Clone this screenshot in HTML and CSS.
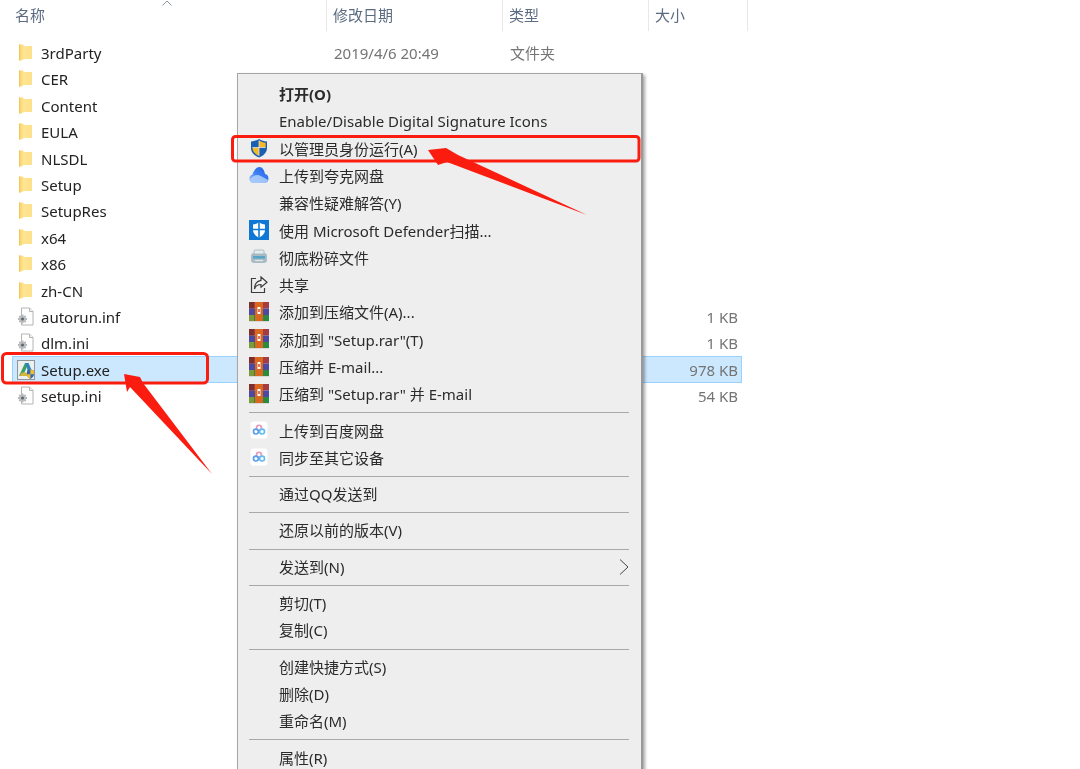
FILE: index.html
```html
<!DOCTYPE html>
<html lang="zh-CN">
<head>
<meta charset="utf-8">
<title>Setup</title>
<link rel="stylesheet" href="styles.css">
</head>
<body>
<svg class="defs" width="0" height="0" aria-hidden="true">
  <defs>
    <linearGradient id="fold" x1="0" y1="0" x2="1" y2="0"><stop offset="0" stop-color="#f6cf62"/><stop offset=".35" stop-color="#ffe592"/><stop offset="1" stop-color="#fde08a"/></linearGradient>
    <linearGradient id="cloud" x1="1" y1="0" x2="0" y2="1"><stop offset="0" stop-color="#1f5fe8"/><stop offset=".55" stop-color="#3f83f2"/><stop offset="1" stop-color="#b5d3fb"/></linearGradient>
    <symbol id="i-folder" viewBox="0 0 18 20"><path d="M2 1.500h4l1 1.500h8v13H7l-3 1.500H2z" fill="url(#fold)"/><path d="M2.500 1.500v16" stroke="#f0c860" fill="none"/></symbol>
    <symbol id="i-file" viewBox="0 0 18 20"><path d="M4.500 1h8l3.500 3.500V18h-11.500z" fill="#fff" stroke="#b4b4b4"/><path d="M12.500 1v3.500H16" fill="#f2f2f2" stroke="#b4b4b4"/><path d="M5.500 7.500v9M1 12h9M2.300 8.800l6.400 6.400M8.700 8.800l-6.400 6.400" stroke="#b3b7ba" stroke-width="1.800"/><circle cx="5.500" cy="12" r="3.400" fill="#b9bdc0"/><circle cx="5.500" cy="12" r="1.500" fill="#5f666b"/></symbol>
    <symbol id="i-exe" viewBox="0 0 18 20"><rect x=".5" y=".5" width="17" height="19" fill="#eef0f0" stroke="#8f9598"/><path d="M2 16 8 3h3.500L6 16z" fill="#3f9f5f"/><path d="M8 3h3.500l3.500 8h-4z" fill="#2b86bd"/><path d="M2.500 16 5 12.500h7L10 16z" fill="#d7b43a"/><path d="M10 10.500l3.400-1.300 3.600 1.300v3.800c0 2.300-1.700 3.700-3.600 4.700-1.800-1-3.400-2.400-3.400-4.700z" fill="#2f68b5"/><path d="M13.400 9.200v5h3.600v-3.700zM10 14.200h3.400V19c-1.800-1-3.400-2.400-3.400-4.800z" fill="#f2bd2e"/></symbol>
    <symbol id="i-shield" viewBox="0 0 20 20"><path d="M10 1c2.500 1.500 5 2.200 8 2.500v6.500c0 4.500-3.500 7.700-8 9.500-4.500-1.800-8-5-8-9.500V3.500C5 3.200 7.500 2.500 10 1z" fill="#1b5fb0"/><path d="M10 2.500v7h6.600V4.700c-2.500-.3-4.600-1-6.600-2.200zM10 9.500H3.400c0 4 3 6.800 6.600 8.300z" fill="#f6b926"/><path d="M10 2.500v15.300M3.400 9.500h13.200" stroke="#e9eef5" stroke-width=".7"/></symbol>
    <symbol id="i-quark" viewBox="0 0 20 18"><path d="M4.500 17a4.200 4.200 0 0 1-1.200-8.200C4.700 4.300 7.500 1 10.500 1 13.500 1 15.500 4.500 16 8a4.600 4.600 0 0 1-.5 9z" fill="url(#cloud)"/><path d="M1 13.500c2.200-3 5.500-5 9-4.200 3 .8 6 3.500 9 4.700-.8 2-2.300 3-3.500 3h-11C2.800 17 1.500 15.500 1 13.500z" fill="#a9cbfb" opacity=".9"/></symbol>
    <symbol id="i-defender" viewBox="0 0 20 20"><rect width="20" height="20" fill="#0f78d4"/><path d="M10 2.500c2 1.200 3.800 1.800 6 2v5.500c0 3.500-2.700 6-6 7.500-3.300-1.500-6-4-6-7.500V4.500c2.200-.2 4-.8 6-2z" fill="#fff"/><path d="M9.200 2.500h1.600v15h-1.600zM4 8.700h12v1.600H4z" fill="#0f78d4"/></symbol>
    <symbol id="i-shred" viewBox="0 0 20 20"><rect x="2" y="6" width="16" height="10" rx="3" fill="#a9bcc4"/><rect x="5" y="3" width="10" height="4" rx="1" fill="#e3ebed" stroke="#9fb2bb" stroke-width=".8"/><rect x="4" y="9" width="12" height="2.600" fill="#58a5c9"/><path d="M6 13.500h8" stroke="#dfe7ea" stroke-width="1.200"/></symbol>
    <symbol id="i-share" viewBox="0 0 20 20"><path d="M7 3.500H2.500v14h13V13" fill="none" stroke="#3c3c3c" stroke-width="1.200"/><path d="M12 2l6 5.200-6 5V9.500C9 9.500 6.500 11 5.500 14 5.500 9.500 8 6 12 5.300z" fill="#f2f2f2" stroke="#3c3c3c" stroke-width="1.200"/></symbol>
    <symbol id="i-rar" viewBox="0 0 20 20"><rect y="0" width="20" height="6.500" fill="#a63b44"/><rect y="6.500" width="20" height="6.500" fill="#4b4aa0"/><rect y="13" width="20" height="6" fill="#2b8a3e"/><rect y="0" width="5" height="6.500" fill="#7d2f2f"/><rect y="13" x="0" width="5" height="6" fill="#7a9a3c"/><rect x="6" width="8" height="19" fill="#d9671d"/><rect x="8.500" y="5" width="3" height="7" fill="#fff"/><rect x="9.300" y="7" width="1.400" height="3" fill="#c23b2a"/><rect y="19" width="20" height="1" fill="#d8d8d8"/></symbol>
    <symbol id="i-baidu" viewBox="-3 -3 26 26"><rect x="-1" y="-1" width="22" height="22" rx="4" fill="#fff"/><circle cx="10" cy="7" r="3.200" fill="none" stroke="#e79ab8" stroke-width="2.200"/><circle cx="6" cy="12" r="3.200" fill="none" stroke="#5a9fec" stroke-width="2.200"/><circle cx="14" cy="12" r="3.200" fill="none" stroke="#63bdf0" stroke-width="2.200"/></symbol>
  </defs>
</svg>

<div class="page">
  <header class="head">
    <div class="col col-name">名称<svg class="sort" viewBox="0 0 10 6"><path d="M.5 5.500 5 1l4.500 4.500" fill="none" stroke="#8b95a3"/></svg></div>
    <div class="col col-date">修改日期</div>
    <div class="col col-type">类型</div>
    <div class="col col-size">大小</div>
  </header>

  <div class="rows">
    <div class="row"><span class="name"><svg class="ficon"><use href="#i-folder"/></svg>3rdParty</span><span class="date">2019/4/6 20:49</span><span class="type">文件夹</span><span class="size"></span></div>
    <div class="row"><span class="name"><svg class="ficon"><use href="#i-folder"/></svg>CER</span></div>
    <div class="row"><span class="name"><svg class="ficon"><use href="#i-folder"/></svg>Content</span></div>
    <div class="row"><span class="name"><svg class="ficon"><use href="#i-folder"/></svg>EULA</span></div>
    <div class="row"><span class="name"><svg class="ficon"><use href="#i-folder"/></svg>NLSDL</span></div>
    <div class="row"><span class="name"><svg class="ficon"><use href="#i-folder"/></svg>Setup</span></div>
    <div class="row"><span class="name"><svg class="ficon"><use href="#i-folder"/></svg>SetupRes</span></div>
    <div class="row"><span class="name"><svg class="ficon"><use href="#i-folder"/></svg>x64</span></div>
    <div class="row"><span class="name"><svg class="ficon"><use href="#i-folder"/></svg>x86</span></div>
    <div class="row"><span class="name"><svg class="ficon"><use href="#i-folder"/></svg>zh-CN</span></div>
    <div class="row"><span class="name"><svg class="ficon"><use href="#i-file"/></svg>autorun.inf</span><span class="date"></span><span class="type"></span><span class="size">1 KB</span></div>
    <div class="row"><span class="name"><svg class="ficon"><use href="#i-file"/></svg>dlm.ini</span><span class="date"></span><span class="type"></span><span class="size">1 KB</span></div>
    <div class="row selected"><span class="name"><svg class="ficon"><use href="#i-exe"/></svg>Setup.exe</span><span class="date"></span><span class="type"></span><span class="size">978 KB</span></div>
    <div class="row"><span class="name"><svg class="ficon"><use href="#i-file"/></svg>setup.ini</span><span class="date"></span><span class="type"></span><span class="size">54 KB</span></div>
  </div>

  <nav class="menu">
    <div class="item bold"><span class="micon"></span>打开(O)</div>
    <div class="item"><span class="micon"></span>Enable/Disable Digital Signature Icons</div>
    <div class="item"><span class="micon"><svg><use href="#i-shield"/></svg></span>以管理员身份运行(A)</div>
    <div class="item"><span class="micon"><svg><use href="#i-quark"/></svg></span>上传到夸克网盘</div>
    <div class="item"><span class="micon"></span>兼容性疑难解答(Y)</div>
    <div class="item"><span class="micon"><svg><use href="#i-defender"/></svg></span>使用 Microsoft Defender扫描...</div>
    <div class="item"><span class="micon"><svg><use href="#i-shred"/></svg></span>彻底粉碎文件</div>
    <div class="item"><span class="micon"><svg><use href="#i-share"/></svg></span>共享</div>
    <div class="item"><span class="micon"><svg><use href="#i-rar"/></svg></span>添加到压缩文件(A)...</div>
    <div class="item"><span class="micon"><svg><use href="#i-rar"/></svg></span>添加到 "Setup.rar"(T)</div>
    <div class="item"><span class="micon"><svg><use href="#i-rar"/></svg></span>压缩并 E-mail...</div>
    <div class="item"><span class="micon"><svg><use href="#i-rar"/></svg></span>压缩到 "Setup.rar" 并 E-mail</div>
    <div class="sep"></div>
    <div class="item"><span class="micon"><svg><use href="#i-baidu"/></svg></span>上传到百度网盘</div>
    <div class="item"><span class="micon"><svg><use href="#i-baidu"/></svg></span>同步至其它设备</div>
    <div class="sep"></div>
    <div class="item"><span class="micon"></span>通过QQ发送到</div>
    <div class="sep"></div>
    <div class="item"><span class="micon"></span>还原以前的版本(V)</div>
    <div class="sep"></div>
    <div class="item"><span class="micon"></span>发送到(N)<svg class="chev" viewBox="0 0 10 16"><path d="M1 .5 9 8l-8 7.500" fill="none" stroke="#444"/></svg></div>
    <div class="sep"></div>
    <div class="item"><span class="micon"></span>剪切(T)</div>
    <div class="item"><span class="micon"></span>复制(C)</div>
    <div class="sep"></div>
    <div class="item"><span class="micon"></span>创建快捷方式(S)</div>
    <div class="item"><span class="micon"></span>删除(D)</div>
    <div class="item"><span class="micon"></span>重命名(M)</div>
    <div class="sep"></div>
    <div class="item"><span class="micon"></span>属性(R)</div>
  </nav>

  <svg class="marks" viewBox="0 0 1080 769" aria-hidden="true">
    <rect class="box" x="232.500" y="136.500" width="406.500" height="24.500" rx="3"/>
    <rect class="box" x="2.500" y="353.500" width="205" height="29.500" rx="4"/>
    <polygon class="arrow" points="428,150 446,148 458,155 587,215 447,162 438,165"/>
    <polygon class="arrow" points="124,374 140,377 143,383 212,474 130,387 127,392"/>
  </svg>
</div>
</body>
</html>
```
FILE: styles.css
```css
html, body {
  margin: 0;
  padding: 0;
  width: 1080px;
  height: 769px;
  overflow: hidden;
  background: #fff;
}
.defs { position: absolute; }
.page {
  position: relative;
  width: 1080px;
  height: 769px;
  overflow: hidden;
  background: #fff;
  font-family: "Noto Sans", "Noto Sans CJK SC", sans-serif;
  font-size: 15px;
  color: #222;
  filter: blur(0.35px);
}

/* column header */
.head {
  display: flex;
  height: 31px;
  margin-bottom: 8.800px;
  color: #5b6b80;
  line-height: 31px;
}
.col { box-sizing: border-box; border-right: 1px solid #e8e8e8; position: relative; }
.col-name { width: 327px; padding-left: 15px; }
.col-date { width: 176px; padding-left: 6px; }
.col-type { width: 146px; padding-left: 6px; }
.col-size { width: 99px; padding-left: 6px; }
.sort { position: absolute; left: 162px; top: 0; width: 10px; height: 6px; }

/* file rows */
.rows { margin-left: 12px; width: 730px; }
.row {
  box-sizing: border-box;
  height: 26.400px;
  display: grid;
  grid-template-columns: 322px 176px 140px 88px;
  align-items: center;
  line-height: 26px;
  white-space: nowrap;
}
.row.selected {
  background: #cce8ff;
  outline: 1px solid #99d1ff;
  outline-offset: -1px;
}
.name { display: flex; align-items: center; }
.ficon { width: 18px; height: 20px; margin-left: 5px; margin-right: 6px; flex: none; }
.date, .type { color: #747474; }
.size { color: #747474; text-align: right; }

/* context menu */
.menu {
  position: absolute;
  left: 237px;
  top: 73px;
  width: 406px;
  box-sizing: border-box;
  padding-top: 6.900px;
  background: #eee;
  border: 1px solid #a6a6a6;
  border-right: 2px solid #999;
  box-shadow: 2px 2px 3px rgba(0, 0, 0, 0.35);
  color: #2b2b2b;
}
.item {
  position: relative;
  box-sizing: border-box;
  display: flex;
  align-items: center;
  height: 27.300px;
  padding-left: 11px;
  padding-bottom: 2px;
  white-space: nowrap;
}
.bold { font-weight: 700; }
.micon {
  display: flex;
  align-items: center;
  justify-content: center;
  width: 20px;
  height: 20px;
  margin-right: 10px;
  flex: none;
}
.micon svg { width: 20px; height: 20px; display: block; }
.chev { position: absolute; left: 381px; top: 5px; width: 10px; height: 16px; }
.sep {
  height: 1px;
  margin: 4px 12px 4px 11px;
  background: #a8a8a8;
}

/* annotations */
.marks {
  position: absolute;
  left: 0;
  top: 0;
  width: 1080px;
  height: 769px;
  pointer-events: none;
}
.box { fill: none; stroke: #fb1c10; stroke-width: 3; }
.arrow { fill: #fb1c10; }
```
